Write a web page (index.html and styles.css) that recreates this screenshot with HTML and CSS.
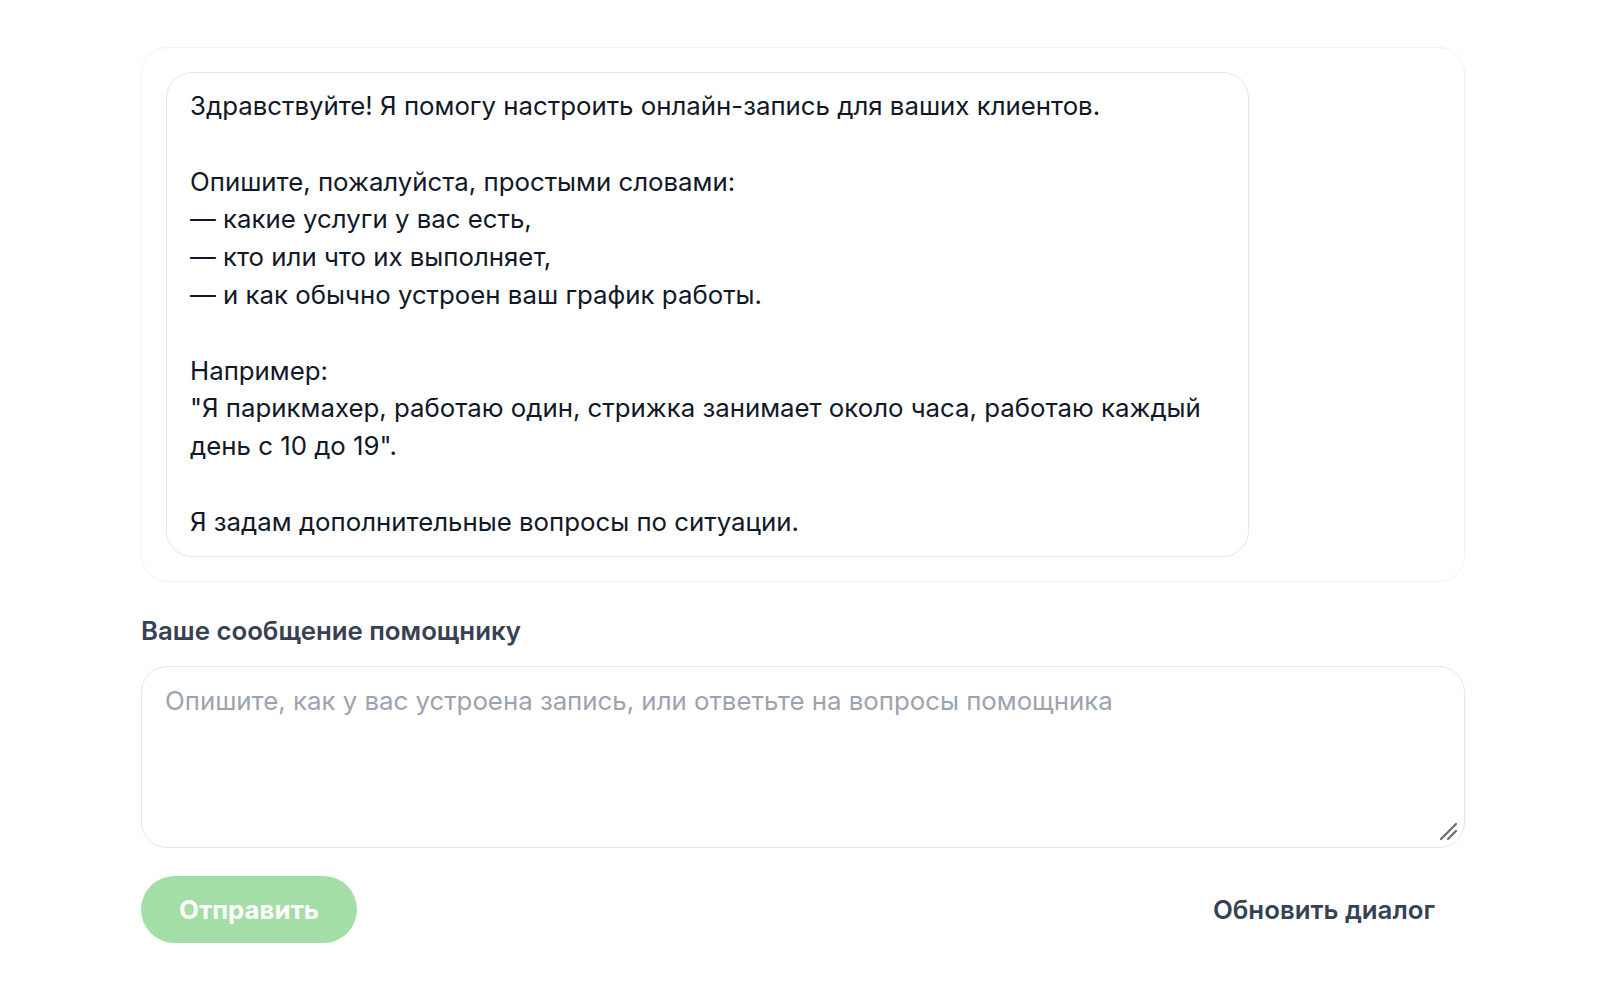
FILE: index.html
```html
<!DOCTYPE html>
<html lang="ru">
<head>
    <meta charset="UTF-8">
    <meta name="viewport" content="width=device-width, initial-scale=1.0">
    <title>Онлайн-запись — помощник</title>
    <link rel="stylesheet" href="styles.css">
</head>
<body>
    <div class="chat-page">
        <div class="chat-log">
            <div class="bubble bubble-assistant">Здравствуйте! Я помогу настроить онлайн-запись для ваших клиентов.

Опишите, пожалуйста, простыми словами:
— какие услуги у вас есть,
— кто или что их выполняет,
— и как обычно устроен ваш график работы.

Например:
"Я парикмахер, работаю один, стрижка занимает около часа, работаю каждый день с 10 до 19".

Я задам дополнительные вопросы по ситуации.</div>
        </div>

        <div class="composer">
            <label for="message" class="composer-label">Ваше сообщение помощнику</label>
            <div class="input-wrap">
                <textarea id="message" class="composer-input" placeholder="Опишите, как у вас устроена запись, или ответьте на вопросы помощника"></textarea>
                <!-- resize grip -->
                <svg class="grip" viewBox="0 0 20 20" aria-hidden="true">
                    <path d="M3 18 L18 3 M10 18 L18 10" stroke="#6b6b6b" stroke-width="2.2" stroke-linecap="round" fill="none"/>
                </svg>
            </div>

            <div class="composer-actions">
                <button class="send-btn" disabled>Отправить</button>
                <button class="reset-btn">Обновить диалог</button>
            </div>
        </div>
    </div>
</body>
</html>
```

FILE: styles.css
```css
* {
    margin: 0;
    padding: 0;
    box-sizing: border-box;
    font-family: Inter, 'Noto Sans', sans-serif;
}

body {
    background-color: #fff;
    padding: 47px 135px 40px 141px;
}

.chat-page {
    width: 100%;
}

.chat-log {
    border: 1px solid #f1f2f4;
    border-radius: 26px;
    padding: 24px;
}

.bubble {
    max-width: 85%;
    border: 1px solid #e4e6ea;
    border-radius: 26px;
    padding: 14px 23px 15px;
    font-size: 25.8px;
    line-height: 37.8px;
    color: #111827;
    white-space: pre-wrap;
}

.composer {
    margin-top: 33px;
}

.composer-label {
    display: block;
    font-size: 25.8px;
    line-height: 31px;
    font-weight: 600;
    color: #374151;
    margin-bottom: 20px;
}

.input-wrap {
    position: relative;
}

.composer-input {
    display: block;
    width: 100%;
    height: 182px;
    border: 1px solid #e4e6ea;
    border-radius: 26px;
    padding: 15px 23px;
    font-size: 25.8px;
    line-height: 37.8px;
    color: #111827;
    resize: none;
    outline: none;
}

.composer-input::placeholder {
    color: #9ca3af;
}

.grip {
    position: absolute;
    right: 7px;
    bottom: 7px;
    width: 20px;
    height: 20px;
    pointer-events: none;
}

.composer-actions {
    display: flex;
    justify-content: space-between;
    align-items: center;
    margin-top: 28px;
}

.send-btn {
    height: 67px;
    padding: 0 38px;
    border: none;
    border-radius: 34px;
    background-color: #a2dea6;
    color: #fff;
    font-size: 25.8px;
    font-weight: 700;
    cursor: not-allowed;
}

.reset-btn {
    background: none;
    border: none;
    padding: 0 30px;
    height: 67px;
    font-size: 25.8px;
    font-weight: 600;
    color: #374151;
    cursor: pointer;
}
```
